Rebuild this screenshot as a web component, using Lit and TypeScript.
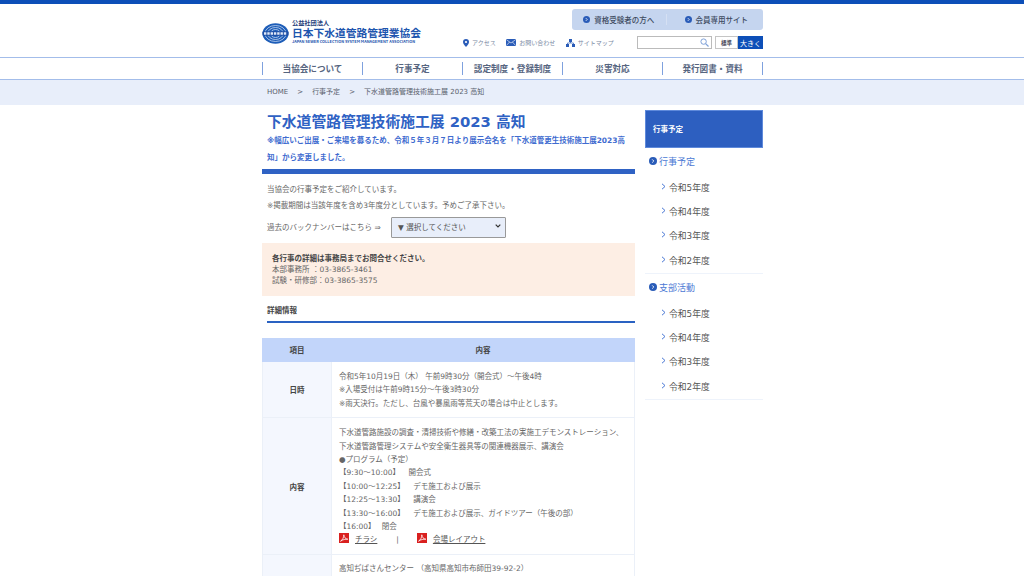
import { LitElement, html, css, svg } from "lit";
import { customElement } from "lit/decorators.js";

const arrowCircle = html`<svg class="circ" viewBox="0 0 10 10"><circle cx="5" cy="5" r="5" fill="#2a5cb8"/><path d="M4 3l2 2-2 2" fill="none" stroke="#fff" stroke-width="1.1"/></svg>`;
const chev = html`<svg class="chev" viewBox="0 0 5 7"><path d="M1 .8L4 3.5 1 6.2" fill="none" stroke="#4a78d4" stroke-width="1"/></svg>`;
const pdf = html`<svg class="pdf" viewBox="0 0 10 10"><rect width="10" height="10" fill="#d9201f"/><path d="M1.5 8.2C3.5 7 5 4.2 4.8 1.8 5 4.2 6.5 6 8.8 6.2 6.5 6 3.8 6.6 1.5 8.2Z" fill="none" stroke="#fff" stroke-width=".8"/></svg>`;

const years = ["令和5年度", "令和4年度", "令和3年度", "令和2年度"];

@customElement("app-root")
export class AppRoot extends LitElement {
  static styles = css`
    :host { display: block; height: 576px; overflow: hidden; background: #fff; color: #555;
      font-family: "DejaVu Sans", "Noto Sans CJK JP", sans-serif; font-size: 7.5px; }
    * { box-sizing: border-box; }
    .topbar { height: 4px; background: #0d4fb8; }
    .wrap { width: 501px; margin-left: 262px; }
    .header { height: 53px; display: flex; justify-content: space-between; }
    .logo { display: flex; gap: 3px; padding-top: 15px; }
    .globe { width: 27px; height: 21px; margin-top: 4px; }
    .logotext { display: flex; flex-direction: column; color: #1d55ae; font-weight: 700; width: 130px; font-family: "Noto Sans CJK JP", sans-serif; }
    .l1 { font-size: 6.2px; line-height: 8px; color: #27407a; }
    .l2 { font-size: 10.75px; line-height: 12px; white-space: nowrap; }
    .l3 { font-size: 3.9px; line-height: 5px; white-space: nowrap; }
    .hright { width: 301px; display: flex; flex-direction: column; align-items: flex-end; padding-top: 5px; }
    .tabs { width: 191px; height: 21px; background: #c5d5ef; border-radius: 3px; display: flex; align-items: center; }
    .tab { flex: 1; display: flex; justify-content: center; align-items: center; gap: 4px; color: #3d4a60; font-weight: 500; font-size: 7.5px; }
    .tab + .tab { border-left: 1px solid #d5e0f3; height: 11px; padding-left: 3px; }
    .circ { width: 7px; height: 7px; flex: none; }
    .tools { display: flex; align-items: center; width: 100%; margin-top: 6px; height: 13px; }
    .tl { display: flex; align-items: center; gap: 3px; color: #7c8ba5; font-size: 6px; margin-right: 10.5px; white-space: nowrap; }
    .tl svg { flex: none; }
    .tl:first-child { margin-left: 1px; }
    .search { width: 75px; height: 13px; border: 1px solid #bbb; margin-left: auto; display: flex; justify-content: flex-end; align-items: center; padding-right: 2px; }
    .size { display: flex; margin-left: 3px; height: 13px; }
    .std { width: 23px; border: 1px solid #c5c5c5; font-size: 5.5px; font-weight: 700; color: #445; display: flex; align-items: center; justify-content: center; }
    .big { width: 25px; background: #0d4fb8; color: #fff; font-size: 7px; display: flex; align-items: center; justify-content: center; }
    .navbar { height: 23px; border-top: 1px solid #a3bdea; border-bottom: 1px solid #a3bdea; padding-top: 4px; }
    .nav { display: flex; align-items: center; width: 501px; border-right: 1px solid #7fa1de; height: 13px; }
    .nav div { flex: 1; height: 13px; border-left: 1px solid #7fa1de; text-align: center; font-size: 8.6px; line-height: 14px; font-weight: 700; color: #56657f; white-space: nowrap; }
    .crumb { height: 25px; background: #e8eefa; font-size: 7px; color: #59606c; line-height: 24px; }
    .crumb .wrap { padding-left: 5px; display: flex; gap: 9px; white-space: nowrap; }
    .body { display: flex; justify-content: space-between; padding-top: 5px; }
    .main { width: 373px; }
    h1 { margin: 0; padding: 1px 0 0 5px; font-size: 14.8px; line-height: 21px; height: 22px; color: #2f62c4; font-weight: 700; white-space: nowrap; }
    .note { margin: 0; padding: 0 5px; font-size: 7.5px; line-height: 17px; font-weight: 700; color: #3f6cd0; height: 37px; }
    .bar { height: 5px; background: #2f62c4; }
    .intro { padding: 8px 5px 0; line-height: 16.3px; color: #666; }
    .sel { display: flex; align-items: center; padding: 2.4px 5px 5px; height: 28.4px; color: #666; }
    .sel span { width: 124px; white-space: nowrap; padding-bottom: 2px; }
    .fakesel { width: 115px; height: 21px; background: #e8eefa; border: 1px solid #999; border-radius: 1px; display: flex; align-items: center; justify-content: space-between; padding: 0 4px 2px 6px; font-size: 7.5px; color: #555; }
    .info { height: 53px; background: #fdeee4; padding: 10px 10px; line-height: 11px; color: #666; }
    .info b { color: #444; display: block; }
    h2 { margin: 0 0 15px 5px; height: 27px; border-bottom: 2px solid #2a62c2; font-size: 7.5px; font-weight: 700; color: #444; line-height: 30px; }
    table { width: 373px; border-collapse: collapse; table-layout: fixed; font-size: 7.5px; color: #666; }
    th, td { border: 1px solid #ebf0f8; font-weight: 400; }
    thead th { background: #c2d5fa; border-color: #c2d5fa; height: 23px; color: #444; font-weight: 700; }
    tbody th { background: #f4f7fe; color: #444; font-weight: 700; }
    td { padding: 8px 7px 7px; line-height: 13.4px; white-space: nowrap; }
    td.last { height: 70px; vertical-align: top; padding-top: 7px; }
    .links { display: flex; align-items: center; height: 13px; margin-bottom: 1px; }
    .pdf { width: 10px; height: 10px; margin-right: 6px; margin-top: -3px; flex: none; }
    .links u { color: #555; }
    .sep { margin: 0 18px 0 19px; }
    .side { width: 118px; }
    .shead { height: 38px; background: #2d5fc0; border: 1px solid #5f8adb; color: #fff; font-weight: 700; font-size: 7.5px; padding-left: 7px; line-height: 37px; }
    .group { border-bottom: 1px solid #eef3fb; height: 126px; }
    .gt { display: flex; align-items: center; gap: 2px; padding-left: 4px; height: 26px; margin-bottom: 1px; color: #4a78d4; font-size: 9px; }
    .gt .circ { width: 8px; height: 8px; }
    .si { display: flex; align-items: center; gap: 3px; height: 24.3px; padding-left: 16px; font-size: 8.8px; color: #555; }
    .chev { width: 5px; height: 7px; flex: none; margin-top: -2px; }
  `;

  render() {
    return html`
      <div class="topbar"></div>
      <div class="wrap header">
        <div class="logo">
          <svg class="globe" viewBox="0 0 27 21">
            <ellipse cx="13.5" cy="10.5" rx="13" ry="10.2" fill="#1d5db8"/>
            ${[[10.5, 8], [7.8, 6], [5, 4]].map(([rx, ry]) => svg`<ellipse cx="13.5" cy="10.5" rx="${rx}" ry="${ry}" fill="none" stroke="#dbe7f8" stroke-width=".7"/>`)}
            <rect x="0.5" y="8.2" width="26" height="4.6" rx="1" fill="#1d4fa5"/>
            <path d="M2 10.5h23" stroke="#dfe9f8" stroke-width="2.4" stroke-dasharray="2.4 .9"/>
          </svg>
          <div class="logotext">
            <div class="l1">公益社団法人</div>
            <div class="l2">日本下水道管路管理業協会</div>
            <div class="l3">JAPAN SEWER COLLECTION SYSTEM MANAGEMENT ASSOCIATION</div>
          </div>
        </div>
        <div class="hright">
          <div class="tabs">
            <div class="tab">${arrowCircle}資格受験者の方へ</div>
            <div class="tab">${arrowCircle}会員専用サイト</div>
          </div>
          <div class="tools">
            <div class="tl"><svg width="6" height="8" viewBox="0 0 6 8"><path d="M3 0a3 3 0 0 1 3 3C6 5 3 8 3 8S0 5 0 3a3 3 0 0 1 3-3Z" fill="#2a5cb8"/><circle cx="3" cy="3" r="1.1" fill="#fff"/></svg>アクセス</div>
            <div class="tl"><svg width="10" height="7" viewBox="0 0 10 7"><rect width="10" height="7" rx=".6" fill="#2a5cb8"/><path d="M.3.6L5 4l4.7-3.4M.3 6.6L3.6 3M9.7 6.6L6.4 3" fill="none" stroke="#fff" stroke-width=".6"/></svg>お問い合わせ</div>
            <div class="tl"><svg width="9" height="8" viewBox="0 0 9 8"><rect x="3" y="0" width="3" height="3" fill="#2a5cb8"/><rect x="0" y="5" width="3" height="3" fill="#2a5cb8"/><rect x="6" y="5" width="3" height="3" fill="#2a5cb8"/><path d="M4.5 3v1H1.5v1M4.5 4h3v1" fill="none" stroke="#2a5cb8" stroke-width=".7"/></svg>サイトマップ</div>
            <div class="search"><svg width="9" height="9" viewBox="0 0 9 9"><circle cx="3.6" cy="3.6" r="2.7" fill="none" stroke="#7fa1d8" stroke-width="1"/><path d="M5.6 5.6L8.5 8.5" stroke="#7fa1d8" stroke-width="1.2"/></svg></div>
            <div class="size"><div class="std">標準</div><div class="big">大きく</div></div>
          </div>
        </div>
      </div>
      <div class="navbar"><div class="wrap nav">
        <div>当協会について</div><div>行事予定</div><div>認定制度・登録制度</div><div>災害対応</div><div>発行図書・資料</div>
      </div></div>
      <div class="crumb"><div class="wrap"><span>HOME</span><span>&gt;</span><span>行事予定</span><span>&gt;</span><span>下水道管路管理技術施工展 2023 高知</span></div></div>
      <div class="wrap body">
        <div class="main">
          <h1>下水道管路管理技術施工展 2023 高知</h1>
          <p class="note">※幅広いご出展・ご来場を募るため、令和５年３月７日より展示会名を「下水道管更生技術施工展2023高知」から変更しました。</p>
          <div class="bar"></div>
          <div class="intro">当協会の行事予定をご紹介しています。<br>※掲載期間は当該年度を含め3年度分としています。予めご了承下さい。</div>
          <div class="sel"><span>過去のバックナンバーはこちら ⇒</span>
            <div class="fakesel">▼ 選択してください<svg width="6" height="4" viewBox="0 0 6 4"><path d="M.7.7L3 3 5.3.7" fill="none" stroke="#333" stroke-width="1.2"/></svg></div>
          </div>
          <div class="info"><b>各行事の詳細は事務局までお問合せください。</b>本部事務所 ：03-3865-3461<br>試験・研修部：03-3865-3575</div>
          <h2>詳細情報</h2>
          <table>
            <colgroup><col style="width:69px"><col></colgroup>
            <thead><tr><th>項目</th><th>内容</th></tr></thead>
            <tbody>
              <tr><th>日時</th><td>令和5年10月19日（木） 午前9時30分（開会式）～午後4時<br>※入場受付は午前9時15分～午後3時30分<br>※雨天決行。ただし、台風や暴風雨等荒天の場合は中止とします。</td></tr>
              <tr><th>内容</th><td>下水道管路施設の調査・清掃技術や修繕・改築工法の実施工デモンストレーション、<br>下水道管路管理システムや安全衛生器具等の関連機器展示、講演会<br>●プログラム（予定）<br>【9:30～10:00】　&nbsp;&nbsp;開会式<br>【10:00～12:25】　&nbsp;&nbsp;デモ施工および展示<br>【12:25～13:30】　&nbsp;&nbsp;講演会<br>【13:30～16:00】　&nbsp;&nbsp;デモ施工および展示、ガイドツアー（午後の部）<br>【16:00】　&nbsp;閉会
                <div class="links">${pdf}<u>チラシ</u><span class="sep">|</span>${pdf}<u>会場レイアウト</u></div></td></tr>
              <tr><th></th><td class="last">高知ぢばさんセンター （高知県高知市布師田39-92-2）</td></tr>
            </tbody>
          </table>
        </div>
        <div class="side">
          <div class="shead">行事予定</div>
          ${["行事予定", "支部活動"].map((g) => html`
            <div class="group">
              <div class="gt">${arrowCircle}${g}</div>
              ${years.map((y) => html`<div class="si">${chev}${y}</div>`)}
            </div>`)}
        </div>
      </div>
    `;
  }
}
